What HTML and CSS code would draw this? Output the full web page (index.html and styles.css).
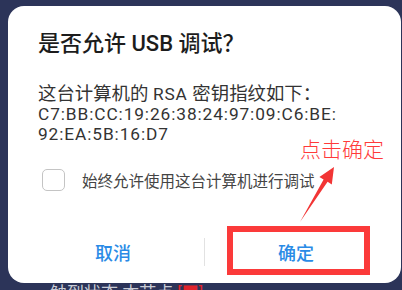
FILE: index.html
```html
<!DOCTYPE html>
<html lang="zh-CN">
<head>
<meta charset="utf-8">
<link rel="stylesheet" href="styles.css">
</head>
<body>
<div class="dialog">
  <div class="title">是否允许 USB 调试？</div>
  <div class="body">
    <div class="line">这台计算机的 <span class="latin">RSA</span> 密钥指纹如下：</div>
    <div class="line latin">C7:BB:CC:19:26:38:24:97:09:C6:BE:</div>
    <div class="line latin">92:EA:5B:16:D7</div>
  </div>
  <div class="check-row">
    <span class="checkbox"></span>
    <span class="check-label">始终允许使用这台计算机进行调试</span>
  </div>
  <div class="actions">
    <div class="btn">取消</div>
    <div class="divider"></div>
    <div class="btn">确定</div>
  </div>
</div>
<div class="under-clip">
  <div class="under">触到状态 本节点<span class="under-red">[■]</span></div>
</div>

<div class="highlight"></div>
<div class="note">点击确定</div>
<svg class="arrow" width="402" height="290" viewBox="0 0 402 290">
  <polygon points="334,167 319.4,177 323.6,179.4 300,222 327.6,181.8 331.8,184.4" fill="#f23535"/>
</svg>
</body>
</html>
```

FILE: styles.css
```css
html, body {
  margin: 0;
  padding: 0;
}
body {
  width: 402px;
  height: 290px;
  overflow: hidden;
  background: #2c3459;
  font-family: "Roboto", "Noto Sans CJK SC", sans-serif;
  position: relative;
}
.dialog {
  margin: 6px 0 0 8px;
  width: 393px;
  height: 277px;
  box-sizing: border-box;
  background: #ffffff;
  border-radius: 16px;
  padding: 24px 0 0 30px;
  display: flex;
  flex-direction: column;
}
.title {
  font-size: 22px;
  line-height: 28px;
  font-weight: 500;
  color: #1c1c1c;
}
.body {
  margin-top: 26px;
  font-size: 18.4px;
  color: #333333;
}
.line {
  height: 20px;
  line-height: 20px;
  white-space: nowrap;
}
.latin {
  font-size: 17.3px;
  letter-spacing: 0.9px;
}
.check-row {
  margin-top: 24px;
  height: 24px;
  display: flex;
  align-items: center;
  padding-left: 4px;
}
.checkbox {
  width: 21px;
  height: 20px;
  border: 1.5px solid #c4c4c4;
  border-radius: 5px;
  flex: none;
}
.check-label {
  margin-left: 17px;
  font-size: 15.5px;
  color: #444444;
}
.actions {
  margin-top: 38px;
  margin-left: -16px;
  width: 365px;
  height: 44px;
  display: flex;
  align-items: center;
}
.btn {
  flex: 1;
  text-align: center;
  font-size: 18px;
  font-weight: 500;
  color: #2a8be6;
}
.divider {
  width: 1px;
  height: 28px;
  background: #e2e2e2;
}
.under-clip {
  height: 7px;
  overflow: hidden;
}
.under {
  padding-left: 50px;
  font-size: 17px;
  line-height: 20px;
  color: #c9ccd6;
  white-space: nowrap;
}
.under-red {
  margin-left: 4px;
  color: #e0242c;
}
.highlight {
  position: absolute;
  left: 227px;
  top: 226px;
  width: 143px;
  height: 49px;
  box-sizing: border-box;
  border: 6px solid #fb3a3a;
}
.note {
  position: absolute;
  left: 300px;
  top: 136px;
  font-size: 21px;
  line-height: 28px;
  color: #ff3a3a;
  font-weight: 300;
}
.arrow {
  position: absolute;
  left: 0;
  top: 0;
}
```
